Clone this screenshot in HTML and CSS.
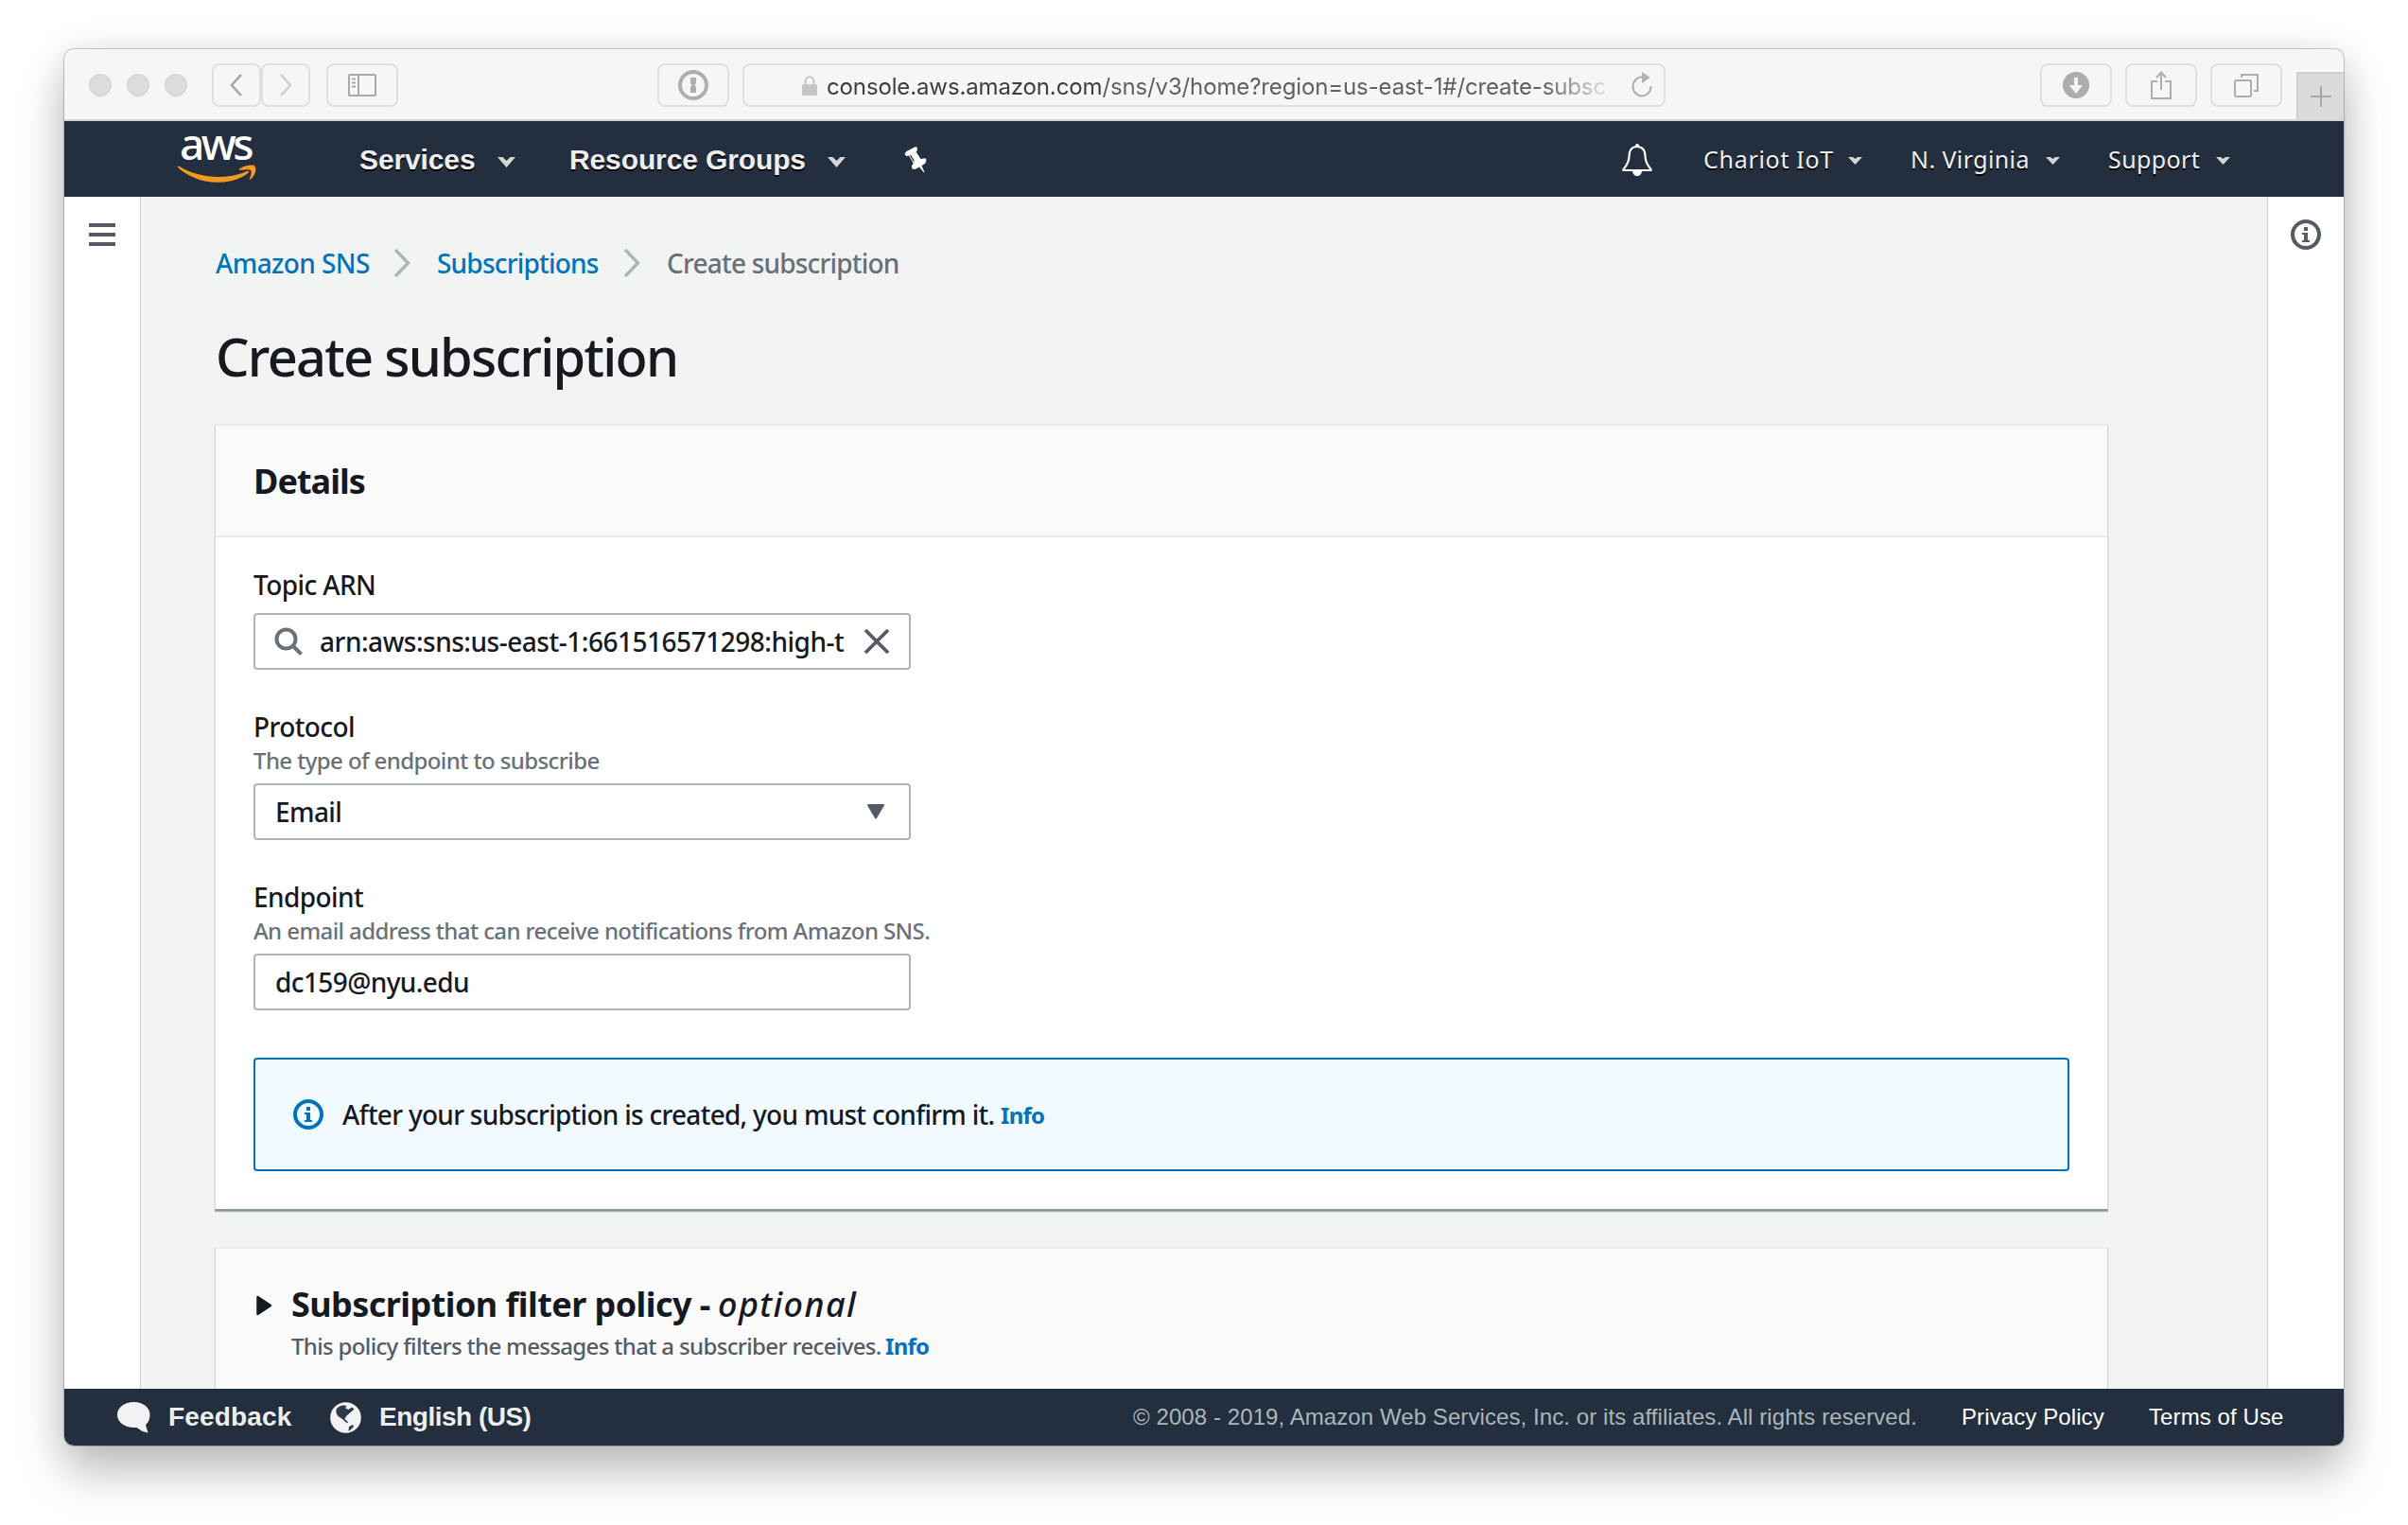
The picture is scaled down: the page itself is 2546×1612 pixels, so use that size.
FILE: index.html
```html
<!DOCTYPE html>
<html lang="en">
<head>
<meta charset="utf-8">
<title>Create subscription</title>
<link rel="stylesheet" href="styles.css">
</head>
<body>
<div class="window">
  <div class="toolbar">
    <div class="lights"><i></i><i></i><i></i></div>
    <div class="btn btn-back"><svg width="16" height="26" viewBox="0 0 16 26"><path d="M13 2 3 13l10 11" fill="none" stroke="#a6a6a6" stroke-width="2.6"/></svg></div>
    <div class="btn btn-fwd"><svg width="16" height="26" viewBox="0 0 16 26"><path d="m3 2 10 11L3 24" fill="none" stroke="#cdcdcd" stroke-width="2.4"/></svg></div>
    <div class="btn btn-side"><svg width="30" height="24" viewBox="0 0 30 24" fill="none" stroke="#a9a9a9" stroke-width="2"><rect x="1" y="1" width="28" height="22" rx="1"/><path d="M11 1v22M4 5.500h4M4 9.500h4M4 13.500h4" /></svg></div>
    <div class="btn btn-pass"><svg width="32" height="32" viewBox="0 0 32 32"><circle cx="16" cy="16" r="14" fill="none" stroke="#aeaeae" stroke-width="4"/><path d="M13 8h6v6l-1.500 2 1.500 2v6h-6v-6l1.500-2-1.500-2z" fill="#aeaeae"/></svg></div>
    <div class="url">
      <svg class="lock" width="16" height="21" viewBox="0 0 16 21"><rect y="9" width="16" height="12" rx="1.500" fill="#c6c6c6"/><path d="M3.500 10V6a4.500 4.800 0 0 1 9 0v4" fill="none" stroke="#c6c6c6" stroke-width="2"/></svg>
      <span class="address"><b>console.aws.amazon.com</b>/sns/v3/home?region=us-east-1#/create-subsc</span>
      <svg width="24" height="28" viewBox="0 0 24 28"><path d="M13 5.500A9.500 10 0 1 0 21.500 15" fill="none" stroke="#b2b2b2" stroke-width="2.200"/><path d="m12 0 9 6-9 6z" fill="#b2b2b2"/></svg>
    </div>
    <div class="btn btn-down"><svg width="28" height="28" viewBox="0 0 28 28"><circle cx="14" cy="14" r="14" fill="#adadad"/><path d="M12 6h4v8h5l-7 9-7-9h5z" fill="#f6f6f6"/></svg></div>
    <div class="btn btn-share"><svg width="24" height="30" viewBox="0 0 24 30" fill="none" stroke="#adadad" stroke-width="2"><path d="M8 11H2v18h20V11h-6M12 20V2M7 7l5-5.500L17 7"/></svg></div>
    <div class="btn btn-tabs"><svg width="26" height="25" viewBox="0 0 26 25" fill="none" stroke="#adadad" stroke-width="2"><rect x="1" y="7" width="17" height="17" rx="1"/><path d="M8 4V1h17v17h-4"/></svg></div>
    <div class="newtab"><svg width="22" height="22" viewBox="0 0 22 22"><path d="M11 0v22M0 11h22" stroke="#a8a8a8" stroke-width="2"/></svg></div>
  </div>

  <div class="nav">
    <div class="logo">
      <span class="logo-text">aws</span>
      <svg width="83" height="19" viewBox="0 0 83 19" fill="#f7981f"><path d="M1 1.500c12 7.500 27 11.500 42 11.500 11 0 21-2 30-6 1.500-.6 2.800 1 1.300 2.100C65 16 53 18.800 42 18.800 26 18.800 11 12.700.3 3.200-.3 2.300.2 1 1 1.500z"/><path d="M65 4.800c4-3.800 14-5.500 16.500-3.100C84 4.500 81 12.500 77 15.500c-.8.600-1.500.3-1.200-.5 1-2.500 2.500-7.300 1.500-8.700-1.200-1.400-6.500-1-11-.5-1.500.2-2.200-.5-1.300-1z"/></svg>
    </div>
    <span class="navb t-services">Services</span><svg class="caret big" width="19" height="11" viewBox="0 0 19 11"><path d="M0 0h5.500l4 4 4-4H19L9.500 11z" fill="#d5d5d5"/></svg>
    <span class="navb t-groups">Resource Groups</span><svg class="caret big" width="19" height="11" viewBox="0 0 19 11"><path d="M0 0h5.500l4 4 4-4H19L9.500 11z" fill="#d5d5d5"/></svg>
    <svg class="pin" width="26" height="28" viewBox="0 0 26 28" fill="#fff"><path d="M.5 8 2 5.200 11.500.3 13.600.6 14 3.800 12.600 5.500 17.500 13l5-.8 1 2.300-1.300 3.200-3.700 2.600L21.500 27l-.5.500-5-6-4.500 2.500-3-.4-.6-3 1.800-3.100L5 9.500 2.500 10.200z"/><path d="m6.500 9 3.800 6.500" stroke="#232f3e" stroke-width="1.400"/></svg>
    <svg class="bell" width="32" height="34" viewBox="0 0 32 34"><path d="M16 3C9.500 3 7.500 8 7.500 13c0 7-3 10-6 14v1h29v-1c-3-4-6-7-6-14 0-5-2-10-8.500-10z" fill="none" stroke="#fff" stroke-width="2.200"/><circle cx="16" cy="2" r="2" fill="#fff"/><path d="M11 28h10c0 8-10 8-10 0z" fill="#fff"/></svg>
    <span class="navs t-chariot">Chariot IoT</span><svg class="caret" width="15" height="8" viewBox="0 0 15 8"><path d="M0 0h5l2.500 2L10 0h5L7.500 8z" fill="#d5d5d5"/></svg>
    <span class="navs t-virginia">N. Virginia</span><svg class="caret" width="15" height="8" viewBox="0 0 15 8"><path d="M0 0h5l2.500 2L10 0h5L7.500 8z" fill="#d5d5d5"/></svg>
    <span class="navs t-support">Support</span><svg class="caret" width="15" height="8" viewBox="0 0 15 8"><path d="M0 0h5l2.500 2L10 0h5L7.500 8z" fill="#d5d5d5"/></svg>
  </div>

  <div class="body">
    <div class="rail rail-left"><div class="burger"><i></i><i></i><i></i></div></div>
    <div class="main">
      <div class="crumbs">
        <span class="link t-c1">Amazon SNS</span>
        <svg width="18" height="30" viewBox="0 0 18 30"><path d="m2 1 13.500 14L2 29" fill="none" stroke="#aab7b8" stroke-width="3.500"/></svg>
        <span class="link t-c2">Subscriptions</span>
        <svg width="18" height="30" viewBox="0 0 18 30"><path d="m2 1 13.500 14L2 29" fill="none" stroke="#aab7b8" stroke-width="3.500"/></svg>
        <span class="t-c3">Create subscription</span>
      </div>
      <h1><span class="t-h1">Create subscription</span></h1>
      <div class="card">
        <div class="card-head"><span class="t-details">Details</span></div>
        <div class="card-body">
          <div class="label lone"><span>Topic ARN</span></div>
          <div class="input search">
            <svg width="30" height="30" viewBox="0 0 30 30" fill="none" stroke="#687078" stroke-width="4"><circle cx="12.500" cy="12.500" r="10"/><path d="m19.500 19.500 9 9"/></svg>
            <span class="clip"><span class="t-arn">arn:aws:sns:us-east-1:661516571298:high-t</span></span>
            <svg width="28" height="28" viewBox="0 0 28 28"><path d="m2 2 24 24M26 2 2 26" stroke="#545b64" stroke-width="3.800"/></svg>
          </div>
          <div class="label"><span>Protocol</span></div>
          <div class="hint"><span>The type of endpoint to subscribe</span></div>
          <div class="input select"><span>Email</span><svg width="20" height="16" viewBox="0 0 20 16"><path d="M2 1h16L10 14.500z" fill="#545b64" stroke="#545b64" stroke-width="2" stroke-linejoin="round"/></svg></div>
          <div class="label"><span>Endpoint</span></div>
          <div class="hint"><span>An email address that can receive notifications from Amazon SNS.</span></div>
          <div class="input"><span>dc159@nyu.edu</span></div>
          <div class="alert">
            <svg width="32" height="32" viewBox="0 0 32 32"><circle cx="16" cy="16" r="14" fill="none" stroke="#0073bb" stroke-width="4"/><path d="M14 8h4v4h-4zM12 14h6v8h2v2h-8v-2h2v-6h-2z" fill="#0073bb"/></svg>
            <span class="t-after">After your subscription is created, you must confirm it.</span>
            <span class="info info-alert">Info</span>
          </div>
        </div>
      </div>
      <div class="card second">
        <svg class="arrow" width="17" height="22" viewBox="0 0 17 22"><path d="M1.500 2v18L15 11z" fill="#16191f" stroke="#16191f" stroke-width="2.500" stroke-linejoin="round"/></svg>
        <div>
          <div class="title"><span class="t-sfp">Subscription filter policy -</span><em>optional</em></div>
          <div class="desc"><span class="t-desc">This policy filters the messages that a subscriber receives.</span><span class="info">Info</span></div>
        </div>
      </div>
    </div>
    <div class="rail rail-right"><svg width="32" height="32" viewBox="0 0 32 32"><circle cx="16" cy="16" r="14" fill="none" stroke="#545b64" stroke-width="4"/><path d="M14 8h4v4h-4zM12 14h6v8h2v2h-8v-2h2v-6h-2z" fill="#545b64"/></svg></div>
  </div>

  <div class="footer">
    <svg class="bubble" width="35" height="33" viewBox="0 0 35 33"><path d="M17.500 0C8 0 0 5.500 0 13.500S8 27 17.500 27h3l6 4 6 1.500L30 24c3-2.500 4.500-6 4.500-10.500C34.500 5.500 27 0 17.500 0z" fill="#f2f2f2"/></svg>
    <span class="footb t-feed">Feedback</span>
    <svg class="globe" width="33" height="33" viewBox="0 0 33 33"><circle cx="16.500" cy="16.500" r="16.300" fill="#f2f2f2"/><path d="M7 7c3-4 8-4 10.500-3l-1.500 2.500 3.500 1.500L23 5.500l2.500 2-4.500 4-4 3.500-1.500 3 3.500 3-1 1.500-5-4.500-4.500-3C7 13 5.500 10 7 7zM20 26l4-2 1 2-4 4-1.500.5z" fill="#2f3a48"/></svg>
    <span class="footb t-eng">English (US)</span>
    <span class="copy">© 2008 - 2019, Amazon Web Services, Inc. or its affiliates. All rights reserved.</span>
    <span class="footl t-priv">Privacy Policy</span>
    <span class="footl">Terms of Use</span>
  </div>
</div>
</body>
</html>
```
FILE: styles.css
```css
* { box-sizing: border-box; }
body {
  margin: 0;
  width: 2546px;
  height: 1612px;
  padding: 52px 68px 0;
  overflow: hidden;
  background: #fff;
  color: #16191f;
  font-family: "Noto Sans", sans-serif;
  font-size: 28px;
}
svg { display: block; flex: none; }
span, em { white-space: nowrap; flex: none; }
.window {
  width: 2410px;
  height: 1476px;
  border-radius: 10px;
  overflow: hidden;
  background: #f2f3f3;
  box-shadow: 0 0 0 1px rgba(0,0,0,.2), 0 30px 50px rgba(0,0,0,.22), 0 4px 40px rgba(0,0,0,.12);
}

/* Browser toolbar */
.toolbar {
  height: 76px;
  display: flex;
  align-items: flex-start;
  background: #f6f6f6;
  border-bottom: 2px solid #d4d4d4;
  padding: 15px 0 0 26px;
}
.lights { display: flex; gap: 16px; padding-top: 11px; width: 130px; }
.lights i { width: 24px; height: 24px; border-radius: 50%; background: #dcdcdc; border: 1px solid #cfcfcf; }
.btn, .url {
  height: 46px;
  border: 2px solid #dfdfdf;
  border-radius: 8px;
  display: flex;
  align-items: center;
  justify-content: center;
}
.btn { width: 76px; }
.btn-back, .btn-fwd { width: 52px; }
.btn-side { margin-left: 17px; }
.btn-pass { margin-left: 274px; }
.url { width: 976px; margin-left: 14px; padding: 0 11px 0 61px; justify-content: flex-start; }
.lock { margin-right: 10px; }
.address {
  width: 823px;
  margin-right: 27px;
  padding-top: 3px;
  overflow: hidden;
  font: 24px/39px Inter, sans-serif;
  letter-spacing: -.13px;
  color: #606060;
  -webkit-mask-image: linear-gradient(90deg, #000 92%, rgba(0,0,0,.15));
  mask-image: linear-gradient(90deg, #000 92%, rgba(0,0,0,.15));
}
.address b { font-weight: 400; color: #3e3e3e; }
.btn-down { margin-left: 396px; }
.btn-share, .btn-tabs { margin-left: 14px; }
.newtab {
  width: 50px;
  height: 50px;
  margin: 9px 0 0 15px;
  background: #dbdbdb;
  border: solid #cecece;
  border-width: 2px 0 0 2px;
  display: flex;
  align-items: center;
  justify-content: center;
}

/* Console navigation */
.nav { height: 80px; display: flex; background: #232f3e; padding-left: 120px; color: #eee; }
.logo { width: 192px; display: flex; flex-direction: column; }
.logo-text { font: 500 46px/46px "Noto Sans", sans-serif; height: 46px; margin-left: 2px; color: #fff; letter-spacing: -3.6px; }
.navb { font: bold 30px/82px "Liberation Sans", sans-serif; text-shadow: 0 2px 0 #000; letter-spacing: -.12px; }
.navs { font: 25px/80px "Noto Sans", sans-serif; text-shadow: 0 2px 0 #000; letter-spacing: .4px; }
.caret { margin-top: 38px; }
.t-services { width: 146px; }
.caret.big { margin-right: 57px; }
.t-groups { width: 273px; }
.pin { margin: 27px 733px 0 5px; }
.bell { margin: 24px 54px 0 0; }
.t-chariot { width: 153px; letter-spacing: .7px; }
.t-virginia { width: 143px; margin-left: 51px; }
.t-support { width: 114px; margin-left: 51px; }

/* Page */
.body { height: 1260px; display: flex; overflow: hidden; background: #f2f3f3; }
.rail { width: 81px; background: #fff; flex: none; }
.rail-left { border-right: 1px solid #ccd1d1; padding: 28px 26px; }
.rail-right { border-left: 1px solid #ccd1d1; padding: 24px 0 0 24px; }
.burger { display: flex; flex-direction: column; gap: 6px; }
.burger i { height: 4px; width: 28px; background: #545b64; }
.main { flex: 1; padding: 55px 168px 0 78px; }
.crumbs { height: 30px; display: flex; align-items: center; color: #687078; font-weight: 500; letter-spacing: -.8px; }
.crumbs span { line-height: 30px; }
.link { color: #0073bb; }
.t-c1 { width: 188px; margin-left: 1px; letter-spacing: -.6px; }
.t-c2 { width: 197px; margin-left: 28px; }
.t-c3 { margin-left: 28px; }
h1 { margin: 43px 0 32px 1px; height: 80px; font: 500 56px/80px "Noto Sans", sans-serif; letter-spacing: -1.75px; }
.card {
  width: 2002px;
  height: 832px;
  background: #fff;
  border: 1px solid #d5dbdb;
  border-top: 2px solid #eaeded;
  border-bottom: 2px solid #879596;
  box-shadow: 0 1px 1px #aab7b8;
}
.card-head {
  height: 118px;
  background: #fafafa;
  border-bottom: 2px solid #eaeded;
  padding-left: 40px;
  font-weight: 700;
  font-size: 36px;
  line-height: 118px;
  letter-spacing: -.95px;
}
.card-body { padding: 32px 40px 0; letter-spacing: -.6px; }
.label { height: 36px; line-height: 36px; font-weight: 500; }
.label.lone { height: 48px; }
.hint { height: 42px; line-height: 35px; font-size: 24px; color: #687078; font-weight: 500; }
.input {
  width: 695px;
  height: 60px;
  margin-bottom: 42px;
  border: 2px solid #aab7b8;
  border-radius: 4px;
  display: flex;
  align-items: center;
  padding: 0 25px 0 21px;
  font-weight: 500;
  line-height: 56px;
}
.search { padding: 0 24px 0 20px; letter-spacing: -.48px; }
.search .clip { width: 556px; margin: 0 19px 0 18px; overflow: hidden; }
.select { justify-content: space-between; }
.alert {
  height: 120px;
  margin-top: 50px;
  background: #f1faff;
  border: 2px solid #0073bb;
  border-radius: 4px;
  display: flex;
  align-items: center;
  padding-left: 40px;
  line-height: 116px;
  font-weight: 500;
}
.t-after { width: 696px; margin-left: 20px; letter-spacing: -.73px; }
.info { font-size: 24px; font-weight: 700; color: #0073bb; letter-spacing: -.7px; }
.info-alert { padding-top: 2px; }
.second { height: 300px; margin-top: 38px; background: #fafafa; display: flex; padding: 32px 0 0 43px; }
.arrow { margin: 17px 20px 0 0; }
.title { display: flex; height: 53px; line-height: 54px; font-weight: 700; font-size: 36px; letter-spacing: -.57px; }
.t-sfp { width: 451px; }
.title em { font-weight: 500; letter-spacing: 1.4px; }
.desc { display: flex; height: 36px; line-height: 36px; font-size: 24px; color: #545b64; font-weight: 500; letter-spacing: -.66px; }
.t-desc { width: 628px; }

/* Footer */
.footer {
  height: 60px;
  display: flex;
  background: #232f3e;
  padding-left: 56px;
  line-height: 59px;
  font-family: "Liberation Sans", sans-serif;
  color: #eee;
}
.bubble, .globe { margin-top: 14px; }
.footb { font-weight: 700; font-size: 28px; }
.t-feed { margin-left: 19px; width: 171px; letter-spacing: .15px; }
.t-eng { margin-left: 19px; width: 797px; letter-spacing: -.5px; }
.copy { font-size: 24px; color: #aab7b8; width: 876px; letter-spacing: .08px; }
.footl { font-size: 24px; color: #fff; letter-spacing: .1px; }
.t-priv { width: 198px; }
```
